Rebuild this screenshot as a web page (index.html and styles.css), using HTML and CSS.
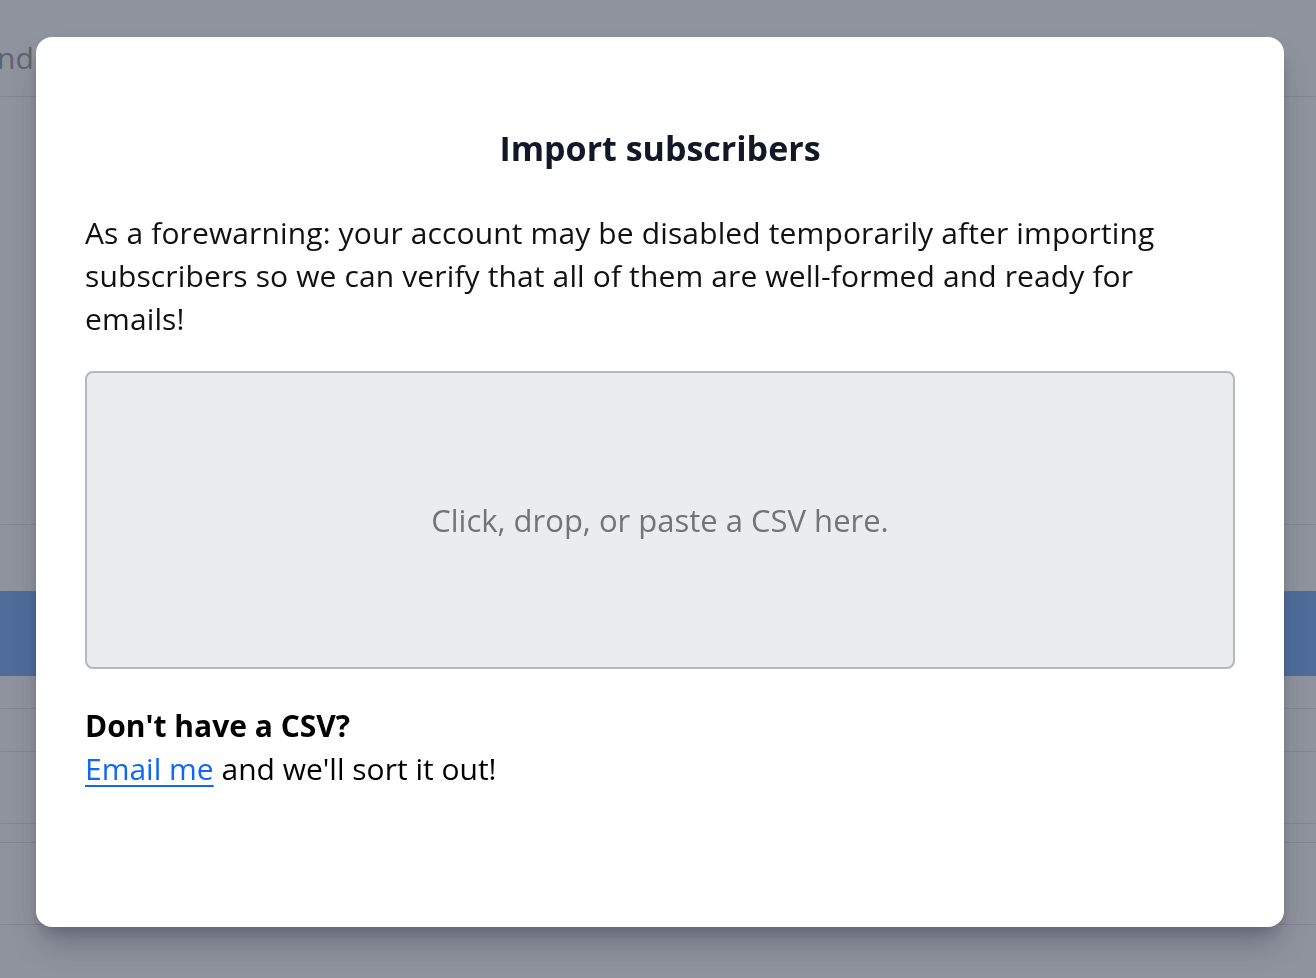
FILE: index.html
```html
<!DOCTYPE html>
<html lang="en">
<head>
<meta charset="utf-8">
<title>Import subscribers</title>
<link rel="stylesheet" href="styles.css">
</head>
<body>
<div class="page">
  <div class="page-header"><span class="page-title">nd</span></div>
  <div class="page-body"></div>
  <div class="row row-a"></div>
  <div class="row row-blue"></div>
  <div class="row row-b"></div>
  <div class="row row-c"></div>
  <div class="row row-d"></div>
  <div class="row row-e"></div>
  <div class="row row-f"></div>
  <div class="row row-g"></div>
</div>
<div class="modal">
  <h2 class="modal-title">Import subscribers</h2>
  <p class="modal-text">As a forewarning: your account may be disabled temporarily after importing subscribers so we can verify that all of them are well-formed and ready for emails!</p>
  <div class="dropzone">Click, drop, or paste a CSV here.</div>
  <div class="help">
    <div class="help-title">Don't have a CSV?</div>
    <div class="help-text"><a class="link" href="#">Email me</a> and we'll sort it out!</div>
  </div>
</div>
</body>
</html>
```

FILE: styles.css
```css
html, body {
  margin: 0;
  padding: 0;
  width: 1316px;
  height: 978px;
  overflow: hidden;
  background: #8f939e;
  font-family: "Open Sans", "Noto Sans", sans-serif;
}
.page {
  display: flex;
  flex-direction: column;
  height: 978px;
}
.page-header {
  height: 97px;
  border-bottom: 1px solid #82868f;
  box-sizing: border-box;
  padding-top: 36px;
}
.page-title {
  display: block;
  margin-left: -3px;
  font-size: 30px;
  line-height: 43px;
  color: #5d6370;
}
.page-body {
  height: 428px;
  border-bottom: 1px solid #82868f;
  box-sizing: border-box;
}
.row { box-sizing: border-box; border-bottom: 1px solid #82868f; }
.row-a { height: 66px; border-bottom: none; }
.row-blue { height: 85px; background: #4f6c9b; border-bottom: none; }
.row-b { height: 33px; }
.row-c { height: 43px; }
.row-d { height: 72px; }
.row-e { height: 19px; }
.row-f { height: 82px; }
.row-g { flex: 1; border-bottom: none; }

.modal {
  position: fixed;
  left: 36px;
  top: 37px;
  width: 1248px;
  height: 890px;
  box-sizing: border-box;
  padding: 91px 49px 0 49px;
  background: #ffffff;
  border-radius: 16px;
  box-shadow: 0 20px 30px -6px rgba(40, 45, 60, 0.35), 0 8px 12px -4px rgba(40, 45, 60, 0.2);
}
.modal-title {
  margin: 0;
  text-align: center;
  font-size: 34px;
  line-height: 40px;
  font-weight: 700;
  color: #111827;
}
.modal-text {
  margin: 43px 0 0 0;
  font-size: 30px;
  line-height: 43px;
  letter-spacing: 0.13px;
  color: #111111;
}
.dropzone {
  margin-top: 31px;
  height: 298px;
  box-sizing: border-box;
  border: 2px solid #b3b7bf;
  border-radius: 8px;
  background: #ebecee;
  display: flex;
  align-items: center;
  justify-content: center;
  font-size: 31px;
  color: #717479;
}
.help {
  margin-top: 35px;
  font-size: 30px;
  line-height: 43px;
  color: #000000;
}
.help-title { font-weight: 700; }
.link {
  color: #0f67f5;
  text-decoration: underline;
  text-underline-offset: 5px;
  text-decoration-thickness: 2px;
}
```
